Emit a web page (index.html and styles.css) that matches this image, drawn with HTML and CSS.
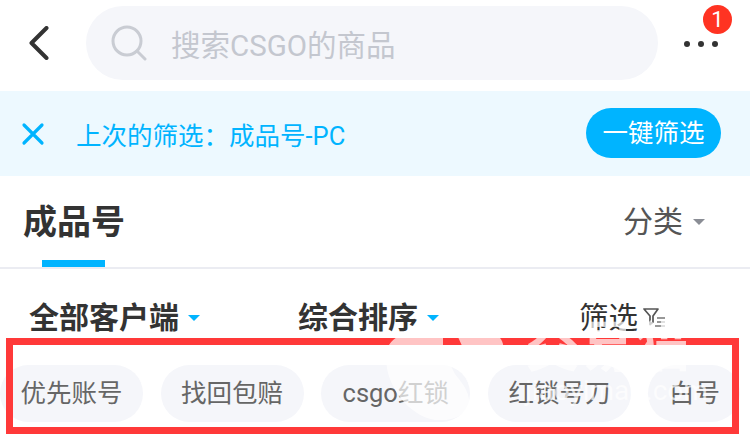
FILE: index.html
```html
<!DOCTYPE html>
<html lang="zh-CN">
<head>
<meta charset="utf-8">
<title>搜索CSGO的商品</title>
<link rel="stylesheet" href="styles.css">
</head>
<body>
<div class="page">
  <header class="topbar">
    <svg class="back" width="20" height="34" viewBox="0 0 20 34"><path d="M17.500 2 2.500 17l15 15" fill="none" stroke="#333" stroke-width="4" stroke-linecap="round" stroke-linejoin="round"/></svg>
    <div class="search">
      <svg class="search-icon" width="36" height="36" viewBox="0 0 36 36"><circle cx="16" cy="16" r="14" fill="none" stroke="#c9ccd3" stroke-width="3"/><path d="m26 26 8 8" stroke="#c9ccd3" stroke-width="3" stroke-linecap="round"/></svg>
      <span class="search-text">搜索CSGO的商品</span>
    </div>
    <div class="more">
      <span class="dot"></span><span class="dot"></span><span class="dot"></span>
      <span class="badge">1</span>
    </div>
  </header>

  <section class="banner">
    <svg class="close" width="24" height="24" viewBox="0 0 24 24"><path d="M3 3l18 18M21 3 3 21" stroke="#00b4ff" stroke-width="3.2" stroke-linecap="round"/></svg>
    <span class="banner-text">上次的筛选：成品号-PC</span>
    <span class="banner-btn">一键筛选</span>
  </section>

  <nav class="tabs">
    <div class="tab">成品号<span class="tab-line"></span></div>
    <div class="cat">分类<span class="tri tri-grey"></span></div>
  </nav>

  <div class="filters">
    <div class="filter f1">全部客户端<span class="tri tri-blue"></span></div>
    <div class="filter f2">综合排序<span class="tri tri-blue"></span></div>
    <div class="filter f3">筛选
      <svg class="funnel" width="26" height="22" viewBox="0 0 26 22"><path d="M2 2h14l-5 7v6l-3 2.500V9z" fill="none" stroke="#555" stroke-width="1.700" stroke-linejoin="round"/><path d="M15 11h8M15 15h8M13 19h10" stroke="#777" stroke-width="1.700"/></svg>
    </div>
  </div>

  <div class="chips">
    <span class="chip">优先账号</span>
    <span class="chip">找回包赔</span>
    <span class="chip chip-latin">csgo红锁</span>
    <span class="chip">红锁号刀</span>
    <span class="chip">白号</span>
  </div>
</div>

<div class="redbox"></div>
<div class="watermark">
  <svg class="wm-logo" width="120" height="102" viewBox="0 0 120 102"><path d="M58 8C30 8 6 14 2 30c-6 30 20 66 48 70 14 2 30-4 34-14 2-14-8-24-14-32L58 30z" fill="#fff"/><path d="M68 6c18-4 46 2 50 18 2 12-10 24-26 26L78 28z" fill="#fff"/></svg>
  <div class="wm-words">
    <span class="wm-name">交易猫</span>
    <span class="wm-url">jiaoyimao.com</span>
  </div>
</div>
</body>
</html>
```
FILE: styles.css
```css
* { box-sizing: border-box; }
html, body { margin: 0; padding: 0; }
body {
  width: 750px;
  height: 443px;
  overflow: hidden;
  background: #fff;
  position: relative;
  font-family: "Roboto", "Noto Sans CJK SC", sans-serif;
  color: #333;
}
.page { width: 750px; }

.topbar {
  height: 91px;
  padding: 6px 0 11px 29px;
  display: flex;
  align-items: center;
}
.back { flex: none; margin-right: 37px; }
.search {
  width: 572px;
  height: 74px;
  border-radius: 37px;
  background: #f5f6fa;
  display: flex;
  align-items: center;
  padding-left: 25px;
  flex: none;
}
.search-icon { flex: none; margin-right: 24px; }
.search-text { font-size: 29.5px; color: #c4c7cf; }
.more {
  position: relative;
  margin: 2px 0 0 26px;
  display: flex;
  gap: 8px;
  align-self: center;
}
.dot { width: 6px; height: 6px; border-radius: 50%; background: #333; }
.badge {
  position: absolute;
  left: 19px;
  top: -36px;
  width: 29px;
  height: 29px;
  border-radius: 50%;
  background: #ff3322;
  color: #fff;
  font-size: 22px;
  line-height: 29px;
  text-align: center;
}

.banner {
  height: 85px;
  background: #edf9ff;
  display: flex;
  align-items: center;
  padding-left: 21px;
}
.close { flex: none; margin-right: 31px; }
.banner-text { font-size: 25.5px; color: #00b4ff; flex: 1; }
.banner-btn {
  width: 135px;
  height: 50px;
  margin: 0 29px 1px 0;
  border-radius: 25px;
  background: #00b4ff;
  color: #fff;
  font-size: 25.5px;
  line-height: 50px;
  text-align: center;
}

.tabs {
  height: 93px;
  border-bottom: 2px solid #ebecf2;
  display: flex;
  justify-content: space-between;
  padding: 0 45px 0 23px;
}
.tab {
  position: relative;
  font-size: 34px;
  font-weight: 700;
  line-height: 93px;
}
.tab-line {
  position: absolute;
  left: 19px;
  bottom: 0;
  width: 63px;
  height: 7px;
  background: #00b4ff;
}
.cat {
  font-size: 30px;
  line-height: 92px;
  color: #555;
  display: flex;
  align-items: center;
}
.tri {
  display: inline-block;
  width: 0;
  height: 0;
  border-left: 6.5px solid transparent;
  border-right: 6.5px solid transparent;
  margin-left: 10px;
}
.tri-grey { border-top: 6px solid #8a8d95; }
.tri-blue { border-top: 6px solid #00b4ff; margin-left: 9px; }

.filters {
  height: 96px;
  display: flex;
  align-items: flex-start;
  padding: 29px 0 0 29px;
}
.filter {
  font-size: 30px;
  font-weight: 700;
  line-height: 40px;
  display: flex;
  align-items: center;
}
.f1 { width: 269px; }
.f2 { width: 281px; }
.f3 { font-weight: 400; font-size: 29.5px; }
.funnel { margin-left: 4px; }

.chips {
  display: flex;
  gap: 17.5px;
  overflow: hidden;
  width: 750px;
}
.chip {
  flex: none;
  height: 57px;
  line-height: 57px;
  padding: 0 20.5px;
  border-radius: 28.5px;
  background: #f5f6fa;
  color: #666;
  font-size: 25.5px;
  white-space: nowrap;
}
.chip-latin { padding: 0 21.5px; }

.redbox {
  position: absolute;
  left: 6px;
  top: 338px;
  width: 733px;
  height: 96px;
  border: 7px solid #ff3939;
}

.watermark {
  position: absolute;
  left: 385px;
  top: 320px;
  width: 340px;
  height: 100px;
  display: flex;
  opacity: 0.7;
  pointer-events: none;
  overflow: hidden;
}
.wm-logo { flex: none; margin-right: 20px; }
.wm-words { display: flex; flex-direction: column; white-space: nowrap; }
.wm-name { font-size: 55px; line-height: 54px; font-weight: 700; color: #fff; }
.wm-url { font-size: 28px; line-height: 34px; color: #fff; }
```
